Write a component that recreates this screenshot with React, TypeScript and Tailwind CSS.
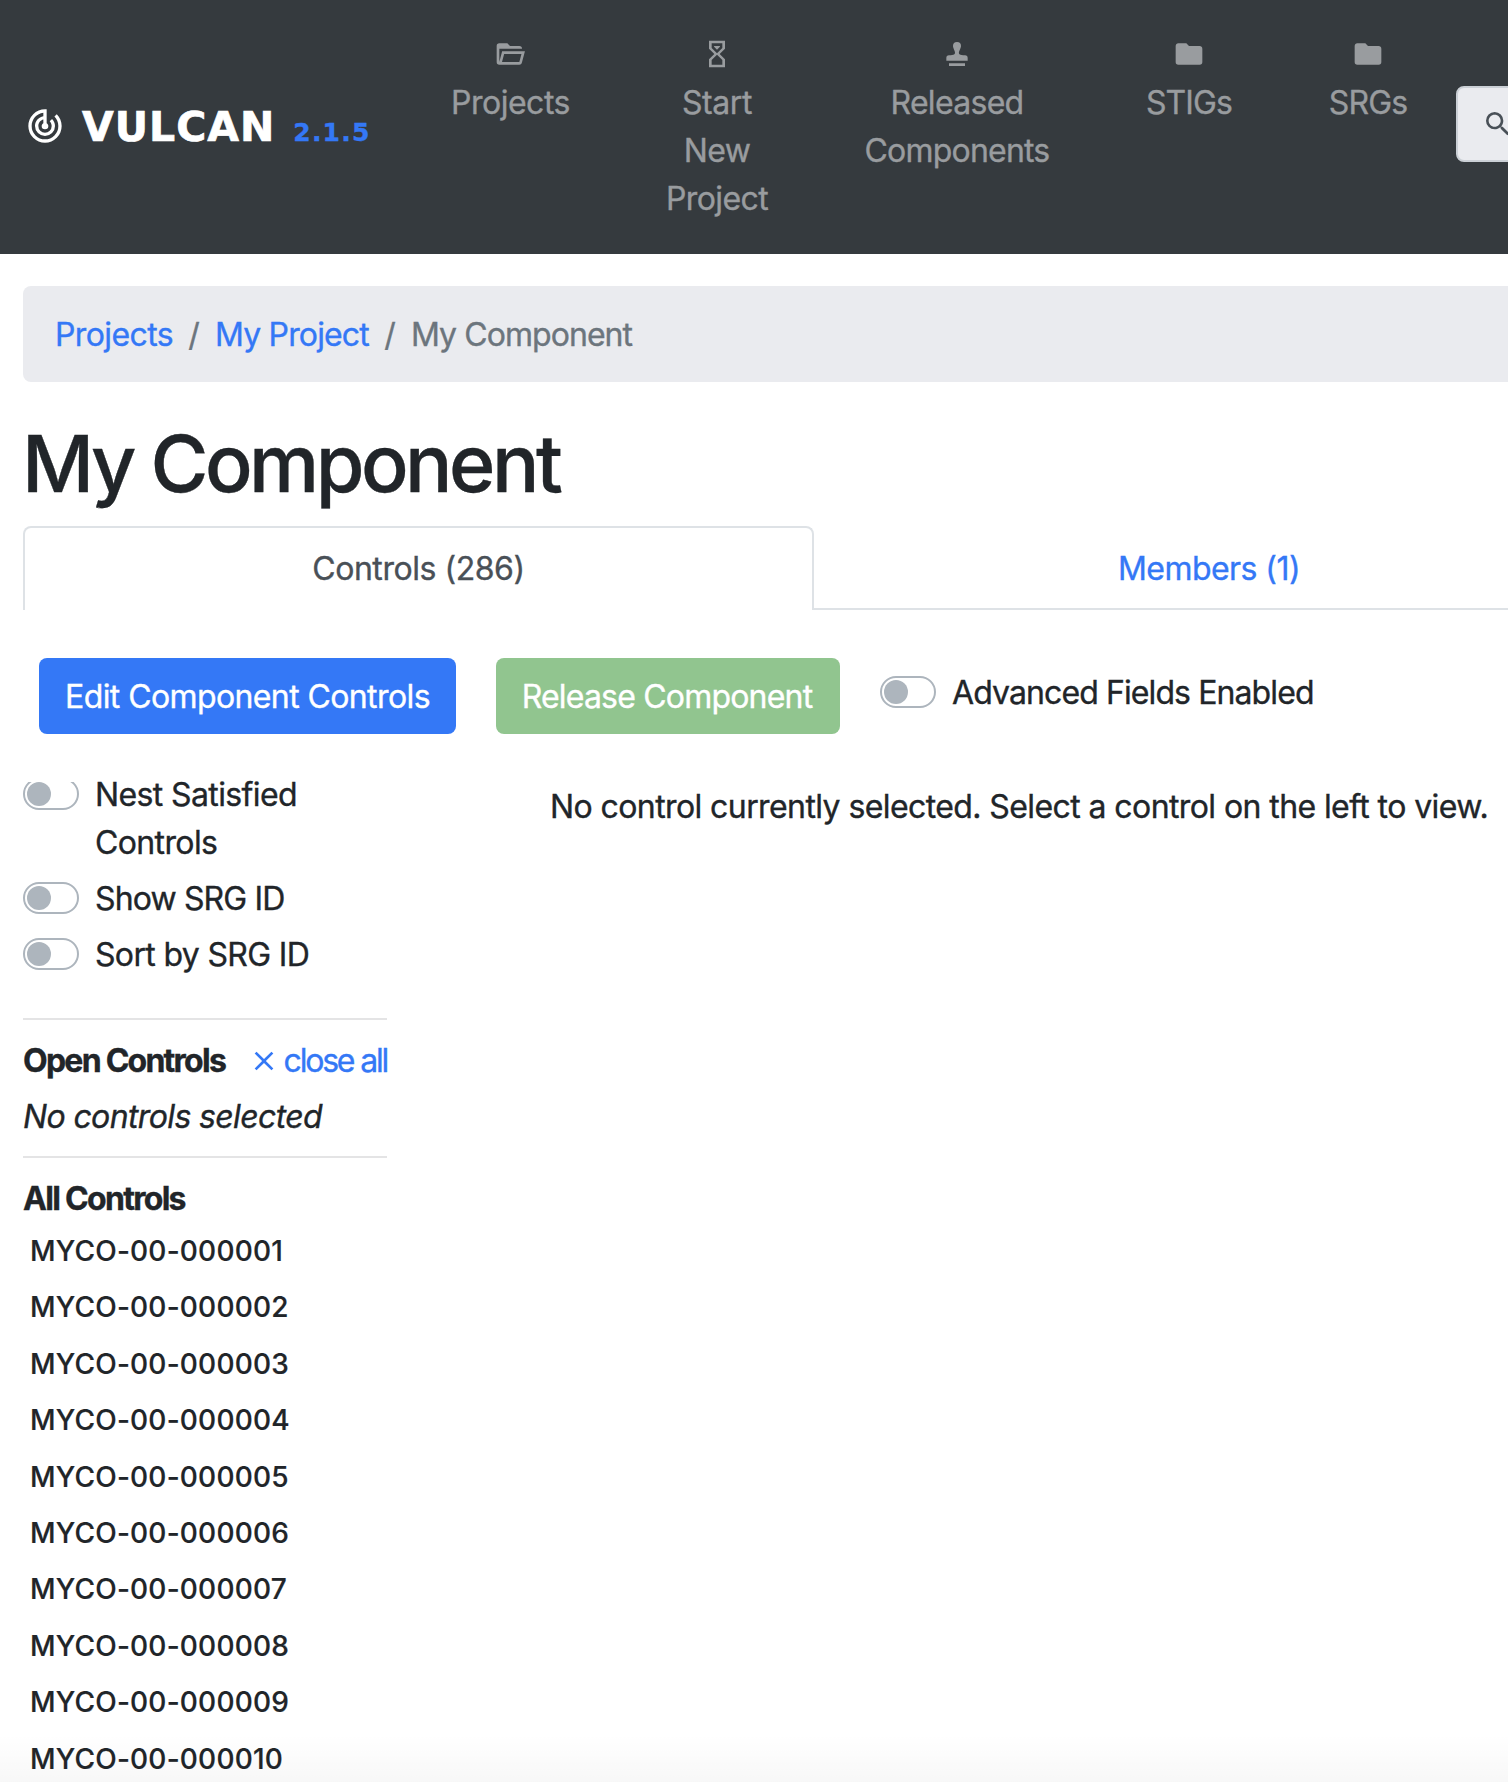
import React from "react";

const ICONS = {
  radar:
    "M19.07,4.93L17.66,6.34C19.1,7.79 20,9.79 20,12A8,8 0 0,1 12,20A8,8 0 0,1 4,12C4,7.92 7.05,4.56 11,4.07V6.09C8.16,6.57 6,9.03 6,12A6,6 0 0,0 12,18A6,6 0 0,0 18,12C18,10.34 17.33,8.84 16.24,7.76L14.83,9.17C15.55,9.9 16,10.9 16,12A4,4 0 0,1 12,16A4,4 0 0,1 8,12C8,10.14 9.28,8.59 11,8.14V10.28C10.4,10.63 10,11.26 10,12A2,2 0 0,0 12,14A2,2 0 0,0 14,12C14,11.26 13.6,10.62 13,10.28V2H12A10,10 0 0,0 2,12A10,10 0 0,0 12,22A10,10 0 0,0 22,12C22,9.24 20.88,6.74 19.07,4.93Z",
  folder:
    "M10,4H4C2.89,4 2,4.89 2,6V18A2,2 0 0,0 4,20H20A2,2 0 0,0 22,18V8C22,6.89 21.1,6 20,6H12L10,4Z",
  folderOpen:
    "M6.1,10L4,18V8H21A2,2 0 0,0 19,6H12L10,4H4A2,2 0 0,0 2,6V18A2,2 0 0,0 4,20H19C19.9,20 20.7,19.4 20.9,18.5L23.2,10H6.1M19,18H6L7.6,12H20.6L19,18Z",
  hourglass:
    "M6,2V8H6V8L10,12L6,16V16H6V22H18V16H18V16L14,12L18,8V8H18V2H6M16,16.5V20H8V16.5L12,12.5L16,16.5M12,11.5L8,7.5V4H16V7.5L12,11.5M9.8,6H14.2V6.6L12,8.8L9.8,6.6V6Z",
  stamp:
    "M12,3A3,3 0 0,0 9,6C9,9 14,13 6,13A2,2 0 0,0 4,15V17H20V15A2,2 0 0,0 18,13C10,13 15,9 15,6A3,3 0 0,0 12,3M6,19V21H18V19H6Z",
  search:
    "M9.5,3A6.5,6.5 0 0,1 16,9.5C16,11.11 15.41,12.59 14.44,13.73L14.71,14H15.5L20.5,19L19,20.5L14,15.5V14.71L13.73,14.44C12.59,15.41 11.11,16 9.5,16A6.5,6.5 0 0,1 3,9.5A6.5,6.5 0 0,1 9.5,3M9.5,5C7,5 5,7 5,9.5C5,12 7,14 9.5,14C12,14 14,12 14,9.5C14,7 12,5 9.5,5Z",
  close:
    "M19,6.41L17.59,5L12,10.59L6.41,5L5,6.41L10.59,12L5,17.59L6.41,19L12,13.41L17.59,19L19,17.59L13.41,12L19,6.41Z",
};

function Icon({ name, className = "size-8" }: { name: keyof typeof ICONS; className?: string }) {
  return (
    <svg viewBox="0 0 24 24" fill="currentColor" className={`shrink-0 ${className}`}>
      <path fillRule="evenodd" d={ICONS[name]} />
    </svg>
  );
}

type NavEntry = {
  icon: keyof typeof ICONS;
  width: string;
  lines: { text: string; tracking: string }[];
};

const NAV: NavEntry[] = [
  { icon: "folderOpen", width: "w-[180px]", lines: [{ text: "Projects", tracking: "tracking-[-0.5px] pl-px" }] },
  {
    icon: "hourglass",
    width: "w-[234px]",
    lines: [
      { text: "Start", tracking: "tracking-[-0.4px]" },
      { text: "New", tracking: "tracking-[-0.6px]" },
      { text: "Project", tracking: "tracking-[-0.6px]" },
    ],
  },
  {
    icon: "stamp",
    width: "w-[246px]",
    lines: [
      { text: "Released", tracking: "tracking-[-0.7px]" },
      { text: "Components", tracking: "tracking-[-0.8px]" },
    ],
  },
  { icon: "folder", width: "w-[218px]", lines: [{ text: "STIGs", tracking: "tracking-[-0.9px]" }] },
  { icon: "folder", width: "w-[140px]", lines: [{ text: "SRGs", tracking: "tracking-[-0.85px]" }] },
];

function Header() {
  return (
    <header className="flex h-[254px] overflow-hidden bg-[#353a3e]">
      <div className="flex w-[420px] shrink-0 items-center pl-[25px] font-['DejaVu_Sans',sans-serif] font-bold">
        <Icon name="radar" className="-mt-0.5 size-10 text-white" />
        <div className="ml-[17px] flex items-baseline whitespace-nowrap">
          <span className="text-[41px] leading-[62px] tracking-[1px] text-white [-webkit-text-stroke:0.7px]">VULCAN</span>
          <span className="ml-[18px] text-[25px] tracking-[1.2px] text-[#3478f6]">2.1.5</span>
        </div>
      </div>
      <nav className="flex shrink-0 pt-[38px] text-[#999c9f]">
        {NAV.map((item, i) => (
          <a key={i} className={`flex shrink-0 flex-col items-center ${item.width}`}>
            <Icon name={item.icon} className="mb-[9px] size-8" />
            {item.lines.map((line) => (
              <span key={line.text} className={`whitespace-nowrap ${line.tracking}`}>
                {line.text}
              </span>
            ))}
          </a>
        ))}
      </nav>
      <div className="mt-[86px] ml-[18px] flex h-[76px] w-[400px] shrink-0 rounded-lg border-2 border-[#cbd0d6] bg-[#eaebef] pt-5 pl-6 text-[#495057]">
        <Icon name="search" />
      </div>
    </header>
  );
}

function Switch({ className = "" }: { className?: string }) {
  return (
    <span
      className={`mt-2 flex h-8 w-14 shrink-0 items-center rounded-full border-2 border-[#adb5bd] bg-white pl-0.5 ${className}`}
    >
      <span className="size-6 rounded-full bg-[#adb5bd]" />
    </span>
  );
}

const CONTROLS = Array.from({ length: 10 }, (_, i) => `MYCO-00-${String(i + 1).padStart(6, "0")}`);

function Sidebar() {
  return (
    <aside className="mt-9 w-[364px] shrink-0">
      <div className="flex flex-col gap-2">
        <label className="flex gap-4">
          <Switch className="[clip-path:inset(4px_0_0_0)]" />
          <span className="mt-px -mb-px w-[240px] tracking-[-0.62px]">Nest Satisfied Controls</span>
        </label>
        <label className="flex gap-4">
          <Switch />
          <span className="mt-px -mb-px tracking-[-0.87px]">Show SRG ID</span>
        </label>
        <label className="flex gap-4">
          <Switch />
          <span className="mt-px -mb-px tracking-[-0.66px]">Sort by SRG ID</span>
        </label>
      </div>
      <hr className="mt-10 border-t-2 border-[#e4e4e5]" />
      <div className="mt-[17px] flex items-center whitespace-nowrap">
        <span className="w-[225px] font-bold tracking-[-1.75px]">Open Controls</span>
        <a className="flex items-center text-[#3478f6]">
          <Icon name="close" />
          <span className="ml-1 tracking-[-2.2px]">close all</span>
        </a>
      </div>
      <p className="mt-2 tracking-[-0.63px] italic">No controls selected</p>
      <hr className="mt-[15px] border-t-2 border-[#e4e4e5]" />
      <p className="mt-[17px] font-bold tracking-[-1.7px]">All Controls</p>
      <ul className="pl-[7px] text-[28px] leading-[56.4px] font-medium tracking-[0.22px] [-webkit-text-stroke:0.2px]">
        {CONTROLS.map((id) => (
          <li key={id}>{id}</li>
        ))}
      </ul>
    </aside>
  );
}

export default function App() {
  return (
    <div className="relative h-[1782px] w-[1508px] overflow-hidden bg-white font-[Inter,sans-serif] text-[32px] leading-[48px] text-[#212529] [-webkit-text-stroke:0.35px]">
      <Header />
      <main className="pl-[23px]">
        <nav className="mt-8 flex h-24 items-center rounded-l-lg bg-[#eaebef] pt-0.5 pl-8 whitespace-nowrap">
          <a className="tracking-[-0.6px] text-[#3478f6]">Projects</a>
          <span className="w-[42px] text-center text-[#6c757d]">/</span>
          <a className="tracking-[-0.85px] text-[#3478f6]">My Project</a>
          <span className="w-[42px] text-center text-[#6c757d]">/</span>
          <span className="tracking-[-0.93px] text-[#6c757d]">My Component</span>
        </nav>
        <h1 className="mt-[33px] -ml-px text-[79px] leading-24 font-medium tracking-[-3.55px]">My Component</h1>
        <div className="mt-[15px] flex h-[84px] text-center">
          <div className="w-[791px] shrink-0 rounded-t-lg border-x-2 border-t-2 border-[#dee2e6] pt-[17px] tracking-[-0.45px] text-[#495057]">
            Controls (286)
          </div>
          <div className="w-[790px] shrink-0 border-b-2 border-[#dee2e6] pt-[19px] tracking-[-0.55px] text-[#3478f6]">
            Members (1)
          </div>
        </div>
        <div className="mt-12 flex pl-4 whitespace-nowrap">
          <button className="h-19 w-[417px] rounded-lg bg-[#3478f6] pt-0.5 tracking-[-0.6px] text-white">
            Edit Component Controls
          </button>
          <button className="ml-10 h-19 w-[344px] rounded-lg bg-[#91c58f] pt-0.5 pr-0.5 tracking-[-0.8px] text-white">
            Release Component
          </button>
          <label className="mt-2.5 ml-10 flex gap-4">
            <Switch />
            <span className="mt-px -mb-px tracking-[-0.9px]">Advanced Fields Enabled</span>
          </label>
        </div>
        <div className="flex">
          <Sidebar />
          <p className="mt-[49px] ml-[163px] tracking-[-0.59px] whitespace-nowrap">
            No control currently selected. Select a control on the left to view.
          </p>
        </div>
      </main>
      <div className="pointer-events-none absolute inset-x-0 bottom-0 h-12 bg-linear-to-b from-black/0 to-black/3" />
    </div>
  );
}
